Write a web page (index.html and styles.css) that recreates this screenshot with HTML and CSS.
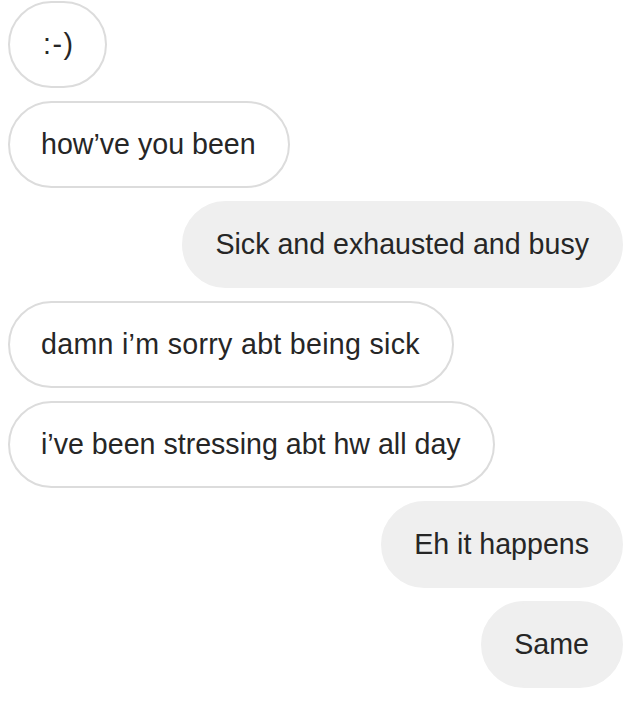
FILE: index.html
```html
<!DOCTYPE html>
<html>
<head>
<meta charset="utf-8">
<link rel="stylesheet" href="styles.css">
</head>
<body>
<div class="thread">
  <div class="msg in emoji">:-)</div>
  <div class="msg in">how’ve you been</div>
  <div class="msg out">Sick and exhausted and busy</div>
  <div class="msg in wide">damn i’m sorry abt being sick</div>
  <div class="msg in">i’ve been stressing abt hw all day</div>
  <div class="msg out">Eh it happens</div>
  <div class="msg out">Same</div>
</div>
</body>
</html>
```
FILE: styles.css
```css
html, body {
  margin: 0;
  padding: 0;
  background: #ffffff;
}
.thread {
  display: flex;
  flex-direction: column;
  gap: 13px;
  padding: 1px 21px 0 8px;
  font-family: "Liberation Sans", Arial, sans-serif;
  font-size: 28.6px;
  color: #262626;
}
.msg {
  box-sizing: border-box;
  height: 87px;
  display: flex;
  align-items: center;
  padding: 0 32px 0 31px;
  border-radius: 44px;
  border: 2px solid #dcdcdc;
  white-space: nowrap;
}
.in {
  align-self: flex-start;
  background: #ffffff;
}
.out {
  align-self: flex-end;
  background: #efefef;
  border-color: #efefef;
}
.emoji {
  width: 99px;
  padding: 0 0 0 33px;
  letter-spacing: 1.5px;
}
.wide {
  letter-spacing: 0.3px;
}
```
